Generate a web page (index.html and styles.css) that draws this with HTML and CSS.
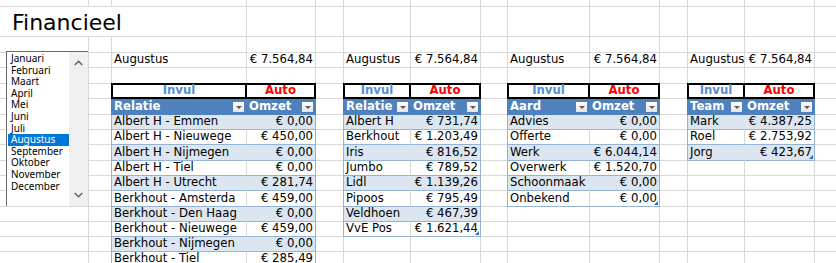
FILE: index.html
```html
<!DOCTYPE html>
<html lang="nl">
<head>
<meta charset="utf-8">
<title>Financieel</title>
<link rel="stylesheet" href="styles.css">
</head>
<body>
<div class="sheet">
  <!-- r0 -->
  <div></div><div></div><div></div><div></div><div></div><div></div><div></div><div></div><div></div><div></div><div></div><div></div><div></div><div></div>
  <!-- r1 -->
  <div class="title">Financieel</div><div></div><div></div><div></div><div></div><div></div><div></div><div></div><div></div><div></div><div></div><div></div>
  <!-- r2 -->
  <div></div><div></div><div></div><div></div><div></div><div></div><div></div><div></div><div></div><div></div><div></div><div></div><div></div><div></div>
  <!-- r3 -->
  <div></div><div></div>
  <div>Augustus</div><div class="n">€ 7.564,84</div><div></div>
  <div>Augustus</div><div class="n">€ 7.564,84</div><div></div>
  <div>Augustus</div><div class="n">€ 7.564,84</div><div></div>
  <div>Augustus</div><div class="n">€ 7.564,84</div><div></div>
  <!-- r4 -->
  <div></div><div></div><div></div><div></div><div></div><div></div><div></div><div></div><div></div><div></div><div></div><div></div><div></div><div></div>
  <!-- r5 -->
  <div></div><div></div>
  <div class="inv">Invul</div><div class="auto">Auto</div><div></div>
  <div class="inv">Invul</div><div class="auto">Auto</div><div></div>
  <div class="inv">Invul</div><div class="auto">Auto</div><div></div>
  <div class="inv">Invul</div><div class="auto">Auto</div><div></div>
  <!-- r6 header -->
  <div></div><div></div>
  <div class="hd c1">Relatie<span class="dd"></span></div><div class="hd c2">Omzet<span class="dd"></span></div><div></div>
  <div class="hd c1">Relatie<span class="dd"></span></div><div class="hd c2">Omzet<span class="dd"></span></div><div></div>
  <div class="hd c1">Aard<span class="dd"></span></div><div class="hd c2">Omzet<span class="dd"></span></div><div></div>
  <div class="hd c1">Team<span class="dd"></span></div><div class="hd c2">Omzet<span class="dd"></span></div><div></div>
  <!-- r7 -->
  <div></div><div></div>
  <div class="d c1 b">Albert H - Emmen</div><div class="d c2 b">€ 0,00</div><div></div>
  <div class="d c1 b">Albert H</div><div class="d c2 b">€ 731,74</div><div></div>
  <div class="d c1 b">Advies</div><div class="d c2 b">€ 0,00</div><div></div>
  <div class="d c1 b">Mark</div><div class="d c2 b">€ 4.387,25</div><div></div>
  <!-- r8 -->
  <div></div><div></div>
  <div class="d c1">Albert H - Nieuwege</div><div class="d c2">€ 450,00</div><div></div>
  <div class="d c1">Berkhout</div><div class="d c2">€ 1.203,49</div><div></div>
  <div class="d c1">Offerte</div><div class="d c2">€ 0,00</div><div></div>
  <div class="d c1">Roel</div><div class="d c2">€ 2.753,92</div><div></div>
  <!-- r9 -->
  <div></div><div></div>
  <div class="d c1 b">Albert H - Nijmegen</div><div class="d c2 b">€ 0,00</div><div></div>
  <div class="d c1 b">Iris</div><div class="d c2 b">€ 816,52</div><div></div>
  <div class="d c1 b">Werk</div><div class="d c2 b">€ 6.044,14</div><div></div>
  <div class="d c1 b">Jorg</div><div class="d c2 b end">€ 423,67</div><div></div>
  <!-- r10 -->
  <div></div><div></div>
  <div class="d c1">Albert H - Tiel</div><div class="d c2">€ 0,00</div><div></div>
  <div class="d c1">Jumbo</div><div class="d c2">€ 789,52</div><div></div>
  <div class="d c1">Overwerk</div><div class="d c2">€ 1.520,70</div><div></div>
  <div></div><div></div><div></div>
  <!-- r11 -->
  <div></div><div></div>
  <div class="d c1 b">Albert H - Utrecht</div><div class="d c2 b">€ 281,74</div><div></div>
  <div class="d c1 b">Lidl</div><div class="d c2 b">€ 1.139,26</div><div></div>
  <div class="d c1 b">Schoonmaak</div><div class="d c2 b">€ 0,00</div><div></div>
  <div></div><div></div><div></div>
  <!-- r12 -->
  <div></div><div></div>
  <div class="d c1">Berkhout - Amsterda</div><div class="d c2">€ 459,00</div><div></div>
  <div class="d c1">Pipoos</div><div class="d c2">€ 795,49</div><div></div>
  <div class="d c1">Onbekend</div><div class="d c2 end">€ 0,00</div><div></div>
  <div></div><div></div><div></div>
  <!-- r13 -->
  <div></div><div></div>
  <div class="d c1 b">Berkhout - Den Haag</div><div class="d c2 b">€ 0,00</div><div></div>
  <div class="d c1 b">Veldhoen</div><div class="d c2 b">€ 467,39</div><div></div>
  <div></div><div></div><div></div>
  <div></div><div></div><div></div>
  <!-- r14 -->
  <div></div><div></div>
  <div class="d c1">Berkhout - Nieuwege</div><div class="d c2">€ 459,00</div><div></div>
  <div class="d c1">VvE Pos</div><div class="d c2 end">€ 1.621,44</div><div></div>
  <div></div><div></div><div></div>
  <div></div><div></div><div></div>
  <!-- r15 -->
  <div></div><div></div>
  <div class="d c1 b">Berkhout - Nijmegen</div><div class="d c2 b">€ 0,00</div><div></div>
  <div></div><div></div><div></div>
  <div></div><div></div><div></div>
  <div></div><div></div><div></div>
  <!-- r16 -->
  <div></div><div></div>
  <div class="d c1">Berkhout - Tiel</div><div class="d c2">€ 285,49</div><div></div>
  <div></div><div></div><div></div>
  <div></div><div></div><div></div>
  <div></div><div></div><div></div>
</div>

<div class="listbox">
  <ul class="items">
    <li>Januari</li>
    <li>Februari</li>
    <li>Maart</li>
    <li>April</li>
    <li>Mei</li>
    <li>Juni</li>
    <li>Juli</li>
    <li class="sel">Augustus</li>
    <li>September</li>
    <li>Oktober</li>
    <li>November</li>
    <li>December</li>
  </ul>
  <div class="scroll">
    <svg width="9" height="6" viewBox="0 0 9 6"><polyline points="0.8,5 4.5,1.3 8.2,5" fill="none" stroke="#606060" stroke-width="1.4"/></svg>
    <svg width="9" height="6" viewBox="0 0 9 6"><polyline points="0.8,1 4.5,4.7 8.2,1" fill="none" stroke="#606060" stroke-width="1.4"/></svg>
  </div>
</div>
</body>
</html>
```
FILE: styles.css
```css
* { box-sizing: border-box; margin: 0; padding: 0; }
html, body { width: 836px; height: 263px; overflow: hidden; background: #fff; }
body {
  position: relative;
  font-family: "DejaVu Sans", Verdana, sans-serif;
  font-size: 11.7px;
  color: #000;
}
.sheet {
  display: grid;
  grid-template-columns: 89px 23px 135px 69px 28px 67px 70px 27px 82px 70px 28px 57px 70px 22px;
  grid-template-rows: 7px 30px 16px 15px 16px 15px 16px 15px 15px 16px 15px 15px 16px 15px 15px 15px 15px;
}
.sheet > div {
  border-right: 1px solid #d9d9d9;
  border-bottom: 1px solid #d9d9d9;
  display: flex;
  align-items: center;
  padding: 0 2px;
  white-space: nowrap;
  line-height: 1;
}
.sheet > .n { justify-content: flex-end; }
.sheet > .title {
  grid-column: span 3;
  font-size: 22px;
  padding-left: 12px;
  padding-top: 3px;
}
.sheet > .inv, .sheet > .auto {
  border: 2px solid #000;
  justify-content: center;
  font-weight: bold;
  margin-top: -1px;
  background: #fff;
  position: relative;
}
.sheet > .inv { color: #558ed5; margin-left: -1px; }
.sheet > .auto { color: #ff0000; border-left: none; }

.sheet > .hd {
  background: #4f81bd;
  color: #fff;
  font-weight: bold;
  border-right-color: #4f81bd;
  border-bottom-color: #4f81bd;
  justify-content: space-between;
}
.sheet > .hd.c1 { box-shadow: -1px 0 0 #4f81bd; }
.dd {
  width: 11px;
  height: 10px;
  background: linear-gradient(#ffffff, #e4e4e4);
  display: flex;
  align-items: center;
  justify-content: center;
}
.dd::after {
  content: "";
  border-left: 3px solid transparent;
  border-right: 3px solid transparent;
  border-top: 3px solid #5a5a5a;
  margin-top: 1px;
}

.sheet > .d {
  overflow: hidden;
  border-bottom-color: #95b3d7;
}
.sheet > .d.c1 { box-shadow: -1px 0 0 #95b3d7; }
.sheet > .d.c2 { justify-content: flex-end; border-right-color: #95b3d7; position: relative; }
.sheet > .d.b { background: #dce6f1; }
.sheet > .d.b.c1 { border-right-color: #dce6f1; }
.sheet > .end::after {
  content: "";
  position: absolute;
  right: 1px;
  bottom: 1px;
  border-left: 4px solid transparent;
  border-bottom: 4px solid #2f6bb5;
}

.listbox {
  position: absolute;
  left: 6px;
  top: 51px;
  width: 82px;
  height: 155px;
  background: #fff;
  border-top: 1px solid #6a6a6a;
  border-left: 1px solid #6a6a6a;
  display: flex;
}
.items {
  list-style: none;
  flex: 1;
  padding: 1px 0 0 1px;
  font-family: "Noto Sans", "Open Sans", sans-serif;
  font-size: 10px;
}
.items li {
  height: 11.6px;
  line-height: 11.6px;
  padding-left: 3px;
  white-space: nowrap;
}
.items li.sel { background: #0078d7; color: #fff; }
.scroll {
  width: 19px;
  background: #f0f0f0;
  display: flex;
  flex-direction: column;
  justify-content: space-between;
  align-items: center;
  padding: 8px 0 8px;
}
.scroll svg { display: block; }
```
